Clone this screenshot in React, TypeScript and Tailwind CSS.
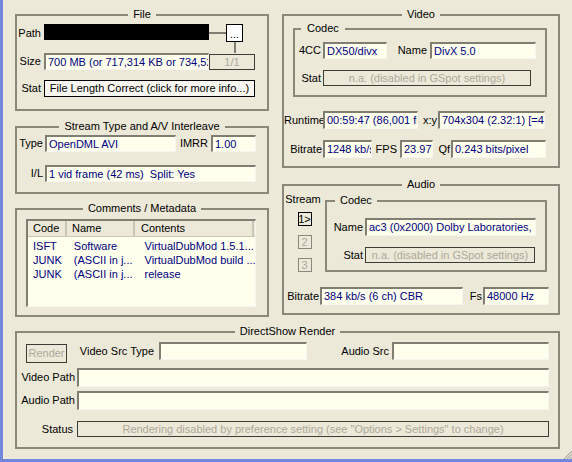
import React from "react";

const fieldCls =
  "flex items-center overflow-hidden whitespace-nowrap bg-[#ffffee] text-[#00007f] pl-[2px] border-t-2 border-l-2 border-r border-b border-t-[#807e72] border-l-[#807e72] border-r-[#f6f5ef] border-b-[#f6f5ef]";
const disabledCls =
  "flex items-center justify-center overflow-hidden whitespace-nowrap border border-[#3c3c36] text-[#aca899]";
const labelCls = "whitespace-nowrap text-right";
const groupCls = "border-2 border-[#8a887b] min-w-0";
const legendCenter = "mx-auto px-[5px] leading-[13px]";

function Group({
  title,
  className,
  legendClassName,
  children,
}: {
  title: string;
  className: string;
  legendClassName?: string;
  children?: React.ReactNode;
}) {
  return (
    <fieldset className={groupCls + " " + className}>
      <legend className={legendClassName ?? legendCenter}>{title}</legend>
      {children}
    </fieldset>
  );
}

function FileGroup() {
  return (
    <Group title="File" className="w-[254px] h-[103px]">
      <div className="grid grid-cols-[27px_165px_5px_12px_17px_12px] grid-rows-[18px_11px_17px] mt-[3px]">
        <div className={labelCls + " col-start-1 row-start-1 self-center pr-[3px]"}>Path</div>
        <div className="col-start-2 row-start-1 self-start h-[16px] bg-black" />
        <div className="col-start-3 col-end-5 row-start-1 self-center h-[2px] bg-[#807e72]" />
        <div className="col-start-5 row-start-1 flex items-end justify-center pb-[2px] border border-black bg-white leading-[10px]">
          ...
        </div>
        <div className="col-start-5 row-start-2 justify-self-center w-[2px] bg-[#807e72]" />
        <div className={labelCls + " col-start-1 row-start-3 self-center pr-[3px]"}>Size</div>
        <div className={fieldCls + " col-start-2 row-start-3"}>
          700 MB (or 717,314 KB or 734,529,920 bytes)
        </div>
        <div className={disabledCls + " col-start-3 col-end-7 row-start-3 h-[16px] self-end"}>1/1</div>
      </div>
      <div className="flex items-center mt-[10px] h-[17px]">
        <div className={labelCls + " w-[27px] pr-[3px]"}>Stat</div>
        <div className="flex items-center justify-center w-[211px] h-[17px] border border-black bg-[#f7f6f0] whitespace-nowrap">
          File Length Correct (click for more info...)
        </div>
      </div>
    </Group>
  );
}

function StreamGroup() {
  return (
    <Group title="Stream Type and A/V Interleave" className="w-[254px] h-[74px] mt-[9px]">
      <div className="flex items-center h-[17px] mt-[2px]">
        <div className={labelCls + " w-[28px] pr-[2px]"}>Type</div>
        <div className={fieldCls + " w-[131px] h-[17px]"}>OpenDML AVI</div>
        <div className={labelCls + " w-[35px] pr-[3px]"}>IMRR</div>
        <div className={fieldCls + " w-[45px] h-[17px]"}>1.00</div>
      </div>
      <div className="flex items-center h-[17px] mt-[13px]">
        <div className={labelCls + " w-[28px] pr-[2px]"}>I/L</div>
        <div className={fieldCls + " w-[211px] h-[17px]"}>1 vid frame (42 ms)&nbsp; Split: Yes</div>
      </div>
    </Group>
  );
}

const rows = [
  ["ISFT", "Software", "VirtualDubMod 1.5.1..."],
  ["JUNK", "(ASCII in j...", "VirtualDubMod build ..."],
  ["JUNK", "(ASCII in j...", "release"],
];

function CommentsGroup() {
  return (
    <Group title="Comments / Metadata" className="w-[254px] h-[115px] mt-[8px]">
      <div className="mt-[4px] ml-[9px] w-[230px] h-[88px] bg-[#ffffee] overflow-hidden border-t-2 border-l-2 border-r border-b border-t-[#807e72] border-l-[#807e72] border-r-[#f6f5ef] border-b-[#f6f5ef]">
        <div className="flex h-[16px] bg-[#ece9d8] border-b border-[#c8c5b5]">
          <div className="w-[39px] pl-[5px] flex items-center border-r-2 border-r-[#c9c6b6]">Code</div>
          <div className="w-[68px] pl-[5px] flex items-center border-r-2 border-r-[#c9c6b6]">Name</div>
          <div className="w-[119px] pl-[6px] flex items-center border-r-2 border-r-[#c9c6b6]">Contents</div>
        </div>
        <div className="pt-[2px] text-[#00007f]">
          {rows.map((r, i) => (
            <div key={i} className="flex h-[14px] items-center whitespace-nowrap">
              <div className="w-[41px] pl-[5px]">{r[0]}</div>
              <div className="w-[70px] pl-[5px] overflow-hidden">{r[1]}</div>
              <div className="w-[117px] pl-[6px] overflow-hidden">{r[2]}</div>
            </div>
          ))}
        </div>
      </div>
    </Group>
  );
}

function VideoGroup() {
  return (
    <Group title="Video" className="w-[278px] h-[160px]">
      <Group
        title="Codec"
        className="w-[254px] h-[75px] ml-[9px] mt-[1px]"
        legendClassName="ml-[6px] px-[6px] leading-[13px]"
      >
        <div className="flex items-center h-[17px] mt-[7px]">
          <div className={labelCls + " w-[28px] pr-[2px]"}>4CC</div>
          <div className={fieldCls + " w-[64px] h-[17px]"}>DX50/divx</div>
          <div className={labelCls + " w-[43px] pr-[3px]"}>Name</div>
          <div className={fieldCls + " w-[106px] h-[17px]"}>DivX 5.0</div>
        </div>
        <div className="flex items-center h-[16px] mt-[11px]">
          <div className={labelCls + " w-[28px] pr-[2px]"}>Stat</div>
          <div className={disabledCls + " w-[208px] h-[16px]"}>n.a. (disabled in GSpot settings)</div>
        </div>
      </Group>
      <div className="flex items-center h-[18px] mt-[14px]">
        <div className={labelCls + " w-[39px] pr-[1px]"}>Runtime</div>
        <div className={fieldCls + " w-[95px] h-[18px]"}>00:59:47 (86,001 frames)</div>
        <div className={labelCls + " w-[20px] pr-[1px]"}>x:y</div>
        <div className={fieldCls + " w-[107px] h-[18px]"}>704x304 (2.32:1) [=44:19]</div>
      </div>
      <div className="flex items-center h-[18px] mt-[11px]">
        <div className={labelCls + " w-[39px] pr-[1px]"}>Bitrate</div>
        <div className={fieldCls + " w-[49px] h-[18px]"}>1248 kb/s</div>
        <div className={labelCls + " w-[28px] pr-[3px]"}>FPS</div>
        <div className={fieldCls + " w-[33px] h-[18px]"}>23.976</div>
        <div className={labelCls + " w-[18px] pr-[1px]"}>Qf</div>
        <div className={fieldCls + " w-[95px] h-[18px]"}>0.243 bits/pixel</div>
      </div>
    </Group>
  );
}

function AudioGroup() {
  return (
    <Group title="Audio" className="w-[278px] h-[137px] mt-[10px]">
      <div className="flex items-start">
        <div className="w-[41px] flex flex-col items-center">
          <div className="mt-[2px] pr-[3px]">Stream</div>
          <div className="mt-[6px] w-[14px] h-[14px] border border-black flex items-center justify-center leading-[12px]">
            1&gt;
          </div>
          <div className="mt-[9px] w-[14px] h-[14px] border border-[#8a887b] text-[#aca899] flex items-center justify-center leading-[12px]">
            2
          </div>
          <div className="mt-[9px] w-[14px] h-[14px] border border-[#8a887b] text-[#aca899] flex items-center justify-center leading-[12px]">
            3
          </div>
        </div>
        <Group
          title="Codec"
          className="w-[222px] h-[78px] mt-[3px]"
          legendClassName="ml-[8px] px-[5px] leading-[13px]"
        >
          <div className="flex items-center h-[18px] mt-[11px]">
            <div className={labelCls + " w-[38px] pr-[2px]"}>Name</div>
            <div className={fieldCls + " w-[171px] h-[18px]"}>ac3 (0x2000) Dolby Laboratories, Inc</div>
          </div>
          <div className="flex items-center h-[16px] mt-[11px]">
            <div className={labelCls + " w-[38px] pr-[2px]"}>Stat</div>
            <div className={disabledCls + " w-[170px] h-[16px]"}>n.a. (disabled in GSpot settings)</div>
          </div>
        </Group>
      </div>
      <div className="flex items-center h-[18px] mt-[15px]">
        <div className={labelCls + " w-[36px] pr-[1px]"}>Bitrate</div>
        <div className={fieldCls + " w-[143px] h-[18px]"}>384 kb/s (6 ch) CBR</div>
        <div className={labelCls + " w-[20px] pr-[1px]"}>Fs</div>
        <div className={fieldCls + " w-[66px] h-[18px]"}>48000 Hz</div>
      </div>
    </Group>
  );
}

function RenderGroup() {
  return (
    <Group title="DirectShow Render" className="w-[545px] h-[124px] mt-[8px]">
      <div className="flex items-center h-[19px] mt-[4px]">
        <div className="ml-[9px] w-[41px] h-[19px] mt-[3px] border border-[#3c3c36] text-[#aca899] flex items-center justify-center">
          Render
        </div>
        <div className={labelCls + " w-[92px] pr-[5px]"}>Video Src Type</div>
        <div className={fieldCls + " w-[148px] h-[18px] self-start"} />
        <div className={labelCls + " w-[85px] pr-[3px]"}>Audio Src</div>
        <div className={fieldCls + " w-[157px] h-[18px] self-start"} />
      </div>
      <div className="flex items-center h-[19px] mt-[7px]">
        <div className={labelCls + " w-[60px] pr-[2px]"}>Video Path</div>
        <div className={fieldCls + " w-[472px] h-[19px]"} />
      </div>
      <div className="flex items-center h-[19px] mt-[4px]">
        <div className={labelCls + " w-[60px] pr-[2px]"}>Audio Path</div>
        <div className={fieldCls + " w-[472px] h-[19px]"} />
      </div>
      <div className="flex items-center h-[16px] mt-[11px]">
        <div className={labelCls + " w-[60px] pr-[4px]"}>Status</div>
        <div className={disabledCls + " w-[472px] h-[16px]"}>
          Rendering disabled by preference setting (see "Options &gt; Settings" to change)
        </div>
      </div>
    </Group>
  );
}

export default function App() {
  return (
    <div className="relative w-[572px] h-[462px] overflow-hidden bg-[#ece9d8] border-l-[3px] border-b-[3px] border-[#7286dc] font-['Liberation_Sans',Arial,sans-serif] text-[11px] leading-[13px] text-black">
      <div className="pt-[8px] pl-[12px]">
        <div className="flex items-start gap-[13px]">
          <div className="flex flex-col w-[254px]">
            <FileGroup />
            <StreamGroup />
            <CommentsGroup />
          </div>
          <div className="flex flex-col w-[278px]">
            <VideoGroup />
            <AudioGroup />
          </div>
        </div>
        <RenderGroup />
      </div>
      <svg className="absolute right-0 bottom-0" width="11" height="11" viewBox="0 0 11 11">
        <g stroke="#ffffff" strokeWidth="1">
          <line x1="2" y1="11" x2="11" y2="2" />
          <line x1="5" y1="11" x2="11" y2="5" />
          <line x1="8" y1="11" x2="11" y2="8" />
        </g>
        <g stroke="#aca899" strokeWidth="1.2">
          <line x1="3" y1="11" x2="11" y2="3" />
          <line x1="6" y1="11" x2="11" y2="6" />
          <line x1="9" y1="11" x2="11" y2="9" />
        </g>
      </svg>
    </div>
  );
}
